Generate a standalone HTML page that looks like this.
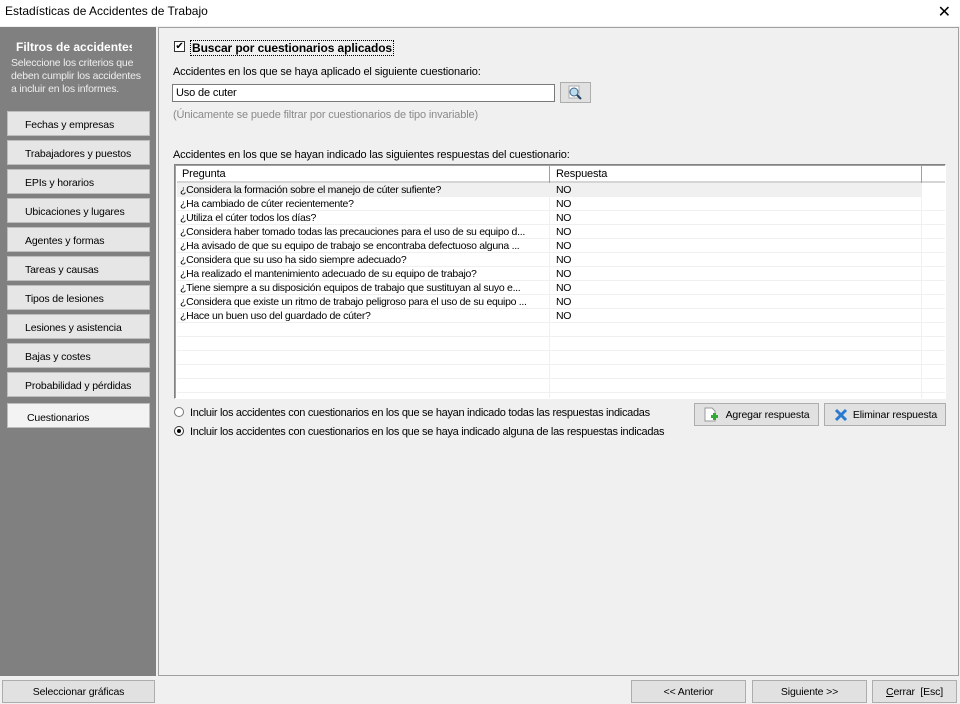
<!DOCTYPE html>
<html><head><style>
*{margin:0;padding:0;box-sizing:border-box}
body{width:960px;height:704px;background:#f0f0f0;font-family:"Liberation Sans",sans-serif;font-size:11px;color:#000;position:relative;overflow:hidden;letter-spacing:-0.15px}
.a{position:absolute}
.title{left:0;top:0;width:960px;height:26px;background:#fff;font-size:12px;padding:4px 0 0 5px;letter-spacing:0}
.side{left:0;top:27px;width:156px;height:649px;background:#808080;color:#fff}
.sb{position:absolute;left:7px;width:143px;height:25px;background:#e6e6e6;border:1px solid #bdbdbd;color:#000;padding:7px 0 0 17px;font-size:10.5px}
.main{left:158px;top:27px;width:801px;height:649px;border:1px solid #a0a0a0;background:#f0f0f0}
.btn{position:absolute;height:23px;background:#e1e1e1;border:1px solid #adadad;text-align:center;padding-top:5px;font-size:10.5px}
.grid{left:174px;top:164px;width:772px;height:235px;background:#fff;border:1px solid #828282;border-right-color:#fff;border-bottom-color:#fff;box-shadow:inset 1px 1px 0 #a0a0a0;overflow:hidden}
.row{position:absolute;left:2px;width:768px;height:14px;border-bottom:1px solid #f0f0f0;font-size:10.5px;line-height:14px;letter-spacing:-0.3px}
.row span{position:absolute;left:3px;width:368px;overflow:hidden;white-space:nowrap}
.row b{font-weight:normal;position:absolute;left:379px}
</style></head><body>
<div class="a title">Estadísticas de Accidentes de Trabajo<span style="position:absolute;right:9px;top:2px;font-size:16px">✕</span></div>
<div class="a side">
<div style="position:absolute;left:16px;top:13px;font-weight:bold;font-size:12px;width:116px;overflow:hidden;white-space:nowrap;letter-spacing:0">Filtros de accidentes</div>
<div style="position:absolute;left:11px;top:30px;line-height:13px;color:#eee;font-size:10.5px;letter-spacing:-0.2px">Seleccione los criterios que<br>deben cumplir los accidentes<br>a incluir en los informes.</div>
<div class="sb" style="top:84px">Fechas y empresas</div>
<div class="sb" style="top:113px">Trabajadores y puestos</div>
<div class="sb" style="top:142px">EPIs y horarios</div>
<div class="sb" style="top:171px">Ubicaciones y lugares</div>
<div class="sb" style="top:200px">Agentes y formas</div>
<div class="sb" style="top:229px">Tareas y causas</div>
<div class="sb" style="top:258px">Tipos de lesiones</div>
<div class="sb" style="top:287px">Lesiones y asistencia</div>
<div class="sb" style="top:316px">Bajas y costes</div>
<div class="sb" style="top:345px">Probabilidad y pérdidas</div>
<div class="sb" style="top:376px;background:#f3f3f3;padding-left:19px;padding-top:8px">Cuestionarios</div>
</div>
<div class="a main"></div>
<div class="a" style="left:174px;top:41px;width:11px;height:11px;border:1px solid #333;background:#fff;font-size:10px;line-height:9px;text-align:center">✔</div>
<div class="a" style="left:190px;top:40px;font-weight:bold;font-size:12px;border:1px dotted #000;padding:0 1px;letter-spacing:-0.1px">Buscar por cuestionarios aplicados</div>
<div class="a" style="left:173px;top:66px">Accidentes en los que se haya aplicado el siguiente cuestionario:</div>
<div class="a" style="left:172px;top:84px;width:383px;height:18px;background:#fff;border:1px solid #7a7a7a;padding:2px 3px">Uso de cuter</div>
<div class="a" style="left:560px;top:82px;width:31px;height:21px;background:#e1e1e1;border:1px solid #adadad"><svg width="29" height="19"><rect x="8" y="3" width="10" height="12" fill="#fff" stroke="#aaa"/><circle cx="13" cy="9" r="4" fill="#bde" stroke="#468"/><line x1="16" y1="12" x2="20" y2="16" stroke="#246" stroke-width="2"/></svg></div>
<div class="a" style="left:173px;top:109px;color:#8a8a8a">(Únicamente se puede filtrar por cuestionarios de tipo invariable)</div>
<div class="a" style="left:173px;top:149px">Accidentes en los que se hayan indicado las siguientes respuestas del cuestionario:</div>
<div class="a grid">
<div style="position:absolute;left:2px;top:1px;width:768px;height:17px;border-bottom:2px solid #d5d5d5"><span style="position:absolute;left:5px;top:2px">Pregunta</span><span style="position:absolute;left:379px;top:2px">Respuesta</span><div style="position:absolute;left:372px;top:0;width:1px;height:17px;background:#a0a0a0"></div><div style="position:absolute;left:744px;top:0;width:1px;height:17px;background:#a0a0a0"></div></div>
<div style="position:absolute;left:374px;top:18px;width:1px;height:215px;background:#f0f0f0"></div>
<div style="position:absolute;left:746px;top:18px;width:1px;height:215px;background:#f0f0f0"></div>
<div class="row" style="top:18px;background:#f0f0f0;width:744px"><span>¿Considera la formación sobre el manejo de cúter sufiente?</span><b>NO</b></div>
<div class="row" style="top:32px"><span>¿Ha cambiado de cúter recientemente?</span><b>NO</b></div>
<div class="row" style="top:46px"><span>¿Utiliza el cúter todos los días?</span><b>NO</b></div>
<div class="row" style="top:60px"><span>¿Considera haber tomado todas las precauciones para el uso de su equipo d...</span><b>NO</b></div>
<div class="row" style="top:74px"><span>¿Ha avisado de que su equipo de trabajo se encontraba defectuoso alguna ...</span><b>NO</b></div>
<div class="row" style="top:88px"><span>¿Considera que su uso ha sido siempre adecuado?</span><b>NO</b></div>
<div class="row" style="top:102px"><span>¿Ha realizado el mantenimiento adecuado de su equipo de trabajo?</span><b>NO</b></div>
<div class="row" style="top:116px"><span>¿Tiene siempre a su disposición equipos de trabajo que sustituyan al suyo e...</span><b>NO</b></div>
<div class="row" style="top:130px"><span>¿Considera que existe un ritmo de trabajo peligroso para el uso de su equipo ...</span><b>NO</b></div>
<div class="row" style="top:144px"><span>¿Hace un buen uso del guardado de cúter?</span><b>NO</b></div>
<div class="row" style="top:158px"></div><div class="row" style="top:172px"></div><div class="row" style="top:186px"></div><div class="row" style="top:200px"></div><div class="row" style="top:214px"></div>
</div>
<div class="a" style="left:174px;top:407px;width:10px;height:10px;border:1px solid #777;border-radius:50%;background:#fff"></div>
<div class="a" style="left:190px;top:407px;letter-spacing:-0.3px">Incluir los accidentes con cuestionarios en los que se hayan indicado todas las respuestas indicadas</div>
<div class="a" style="left:174px;top:426px;width:10px;height:10px;border:1px solid #333;border-radius:50%;background:#fff"><div style="margin:2px;width:4px;height:4px;border-radius:50%;background:#000"></div></div>
<div class="a" style="left:190px;top:426px;letter-spacing:-0.3px">Incluir los accidentes con cuestionarios en los que se haya indicado alguna de las respuestas indicadas</div>
<div class="btn" style="left:694px;top:403px;width:125px;padding-left:22px"><svg style="position:absolute;left:8px;top:3px" width="16" height="16"><path d="M2 1h7l3 3v10H2z" fill="#fff" stroke="#999"/><rect x="8" y="8" width="7" height="3" fill="#3a3"/><rect x="10" y="6" width="3" height="7" fill="#3a3"/></svg>Agregar respuesta</div>
<div class="btn" style="left:824px;top:403px;width:122px;padding-left:20px"><svg style="position:absolute;left:9px;top:4px" width="14" height="14"><path d="M2 2L12 12M12 2L2 12" stroke="#2a7ad0" stroke-width="3"/></svg>Eliminar respuesta</div>
<div class="btn" style="left:2px;top:680px;width:153px">Seleccionar gráficas</div>
<div class="btn" style="left:631px;top:680px;width:115px">&lt;&lt; Anterior</div>
<div class="btn" style="left:752px;top:680px;width:115px">Siguiente &gt;&gt;</div>
<div class="btn" style="left:872px;top:680px;width:85px"><u>C</u>errar&nbsp; [Esc]</div>
</body></html>
